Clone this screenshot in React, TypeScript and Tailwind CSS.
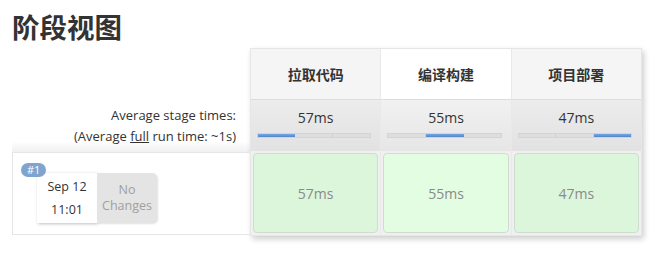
const stages = [
  { name: "拉取代码", avg: "57ms", seg: 0, head: "bg-[#f5f5f5]", avgBg: "from-[#ececec] to-[#e2e2e2]", cell: "bg-[#dcf6dc]" },
  { name: "编译构建", avg: "55ms", seg: 1, head: "bg-white", avgBg: "from-[#f1f1f1] to-[#e6e6e6]", cell: "bg-[#e3fde3]" },
  { name: "项目部署", avg: "47ms", seg: 2, head: "bg-[#f5f5f5]", avgBg: "from-[#ececec] to-[#e2e2e2]", cell: "bg-[#dcf6dc]" },
];

function Bar({ seg }: { seg: number }) {
  return (
    <div className="ml-[6px] mr-[9px] flex h-[5px] border border-[#d4d4d4] bg-[#dedede]">
      {[0, 1, 2].map((i) => (
        <div
          key={i}
          className={
            i === seg
              ? "flex-1 bg-gradient-to-b from-[#7aa6e0] to-[#4f86d0]"
              : "flex-1 border-r border-[#cfcfcf] last:border-r-0"
          }
        />
      ))}
    </div>
  );
}

export default function App() {
  return (
    <div className="h-[253px] w-[672px] bg-white pl-[12px] pt-[8px] font-['Open_Sans','Noto_Sans_CJK_SC',sans-serif] text-[#333]">
      <h2 className="h-[40px] text-[27.5px] font-bold leading-[36px] text-[#333] font-['Noto_Sans_CJK_SC',sans-serif]">
        阶段视图
      </h2>

      <div className="flex">
        {/* left: labels and run row */}
        <div className="w-[238px] pt-[51px]">
          <div className="h-[53px] bg-gradient-to-b from-white from-80% to-[#f0f0f0] pr-[14px] pt-[6px] text-right text-[13px] leading-[21px]">
            <div>Average stage times:</div>
            <div>
              (Average <span className="underline">full</span> run time: ~1s)
            </div>
          </div>
          <div className="relative h-[83px] border-y border-l border-[#e6e6e6]">
            <div className="absolute left-[8px] top-[10px] z-10 rounded-full bg-[#7fa5cf] px-[6px] text-[11px] leading-[14px] text-white">
              #1
            </div>
            <div className="ml-[24px] mt-[20px] flex h-[50px]">
              <div className="flex w-[60px] flex-col items-center justify-center gap-[3px] bg-white text-[12.5px] leading-[20px] text-[#333] shadow-[1px_1px_3px_rgba(0,0,0,0.25)]">
                <div>Sep 12</div>
                <div>11:01</div>
              </div>
              <div className="flex w-[60px] flex-col items-center justify-center rounded-r-[5px] bg-[#e4e4e4] text-[12.5px] leading-[16px] text-[#a0a0a0] shadow-[1px_1px_2px_rgba(0,0,0,0.12)]">
                <div>No</div>
                <div>Changes</div>
              </div>
            </div>
          </div>
        </div>

        {/* right: stage table */}
        <div className="grid w-[392px] grid-cols-3 gap-x-px border border-[#e6e6e6] bg-[#e9e9e9] shadow-[2px_3px_6px_rgba(0,0,0,0.2)]">
          {stages.map((s) => (
            <div key={s.name} className="flex flex-col">
              <div className={`flex h-[50px] items-center justify-center text-[14px] font-bold text-[#333] ${s.head}`}>
                {s.name}
              </div>
              <div className={`h-[52px] border-t border-[#dcdcdc] bg-gradient-to-b pt-[9px] ${s.avgBg}`}>
                <div className="mb-[6px] text-center text-[14px] leading-[18px] text-[#333]">{s.avg}</div>
                <Bar seg={s.seg} />
              </div>
              <div className="bg-[#f0f0f0] px-[2px] pb-[2px] pt-[2px]">
                <div
                  className={`flex h-[80px] items-center justify-center rounded-[4px] border border-[#cfdccf] text-[14px] text-[#8a8a8a] ${s.cell}`}
                >
                  {s.avg}
                </div>
              </div>
            </div>
          ))}
        </div>
      </div>
    </div>
  );
}
